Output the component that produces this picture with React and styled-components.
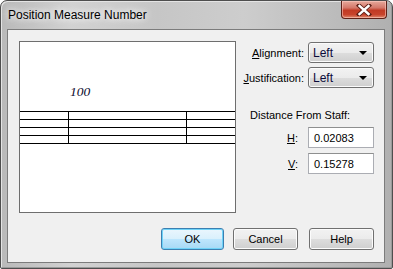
import React from "react";
import styled, { createGlobalStyle } from "styled-components";

const GlobalStyle = createGlobalStyle`
  html, body {
    margin: 0;
    padding: 0;
    background: #ffffff;
  }
  body {
    font-family: "Liberation Sans", Arial, sans-serif;
  }
`;

const Window = styled.div`
  box-sizing: border-box;
  width: 393px;
  height: 269px;
  border: 1px solid #4e4e4e;
  border-radius: 7px 7px 2px 2px;
  background: linear-gradient(
    to right,
    #b9b9b9 0%,
    #d2d2d2 18%,
    #c6c6c6 40%,
    #cdcdcd 62%,
    #bcbcbc 85%,
    #b0b0b0 100%
  );
  box-shadow: inset 1px 1px 0 #e4e4e4, inset -1px -1px 0 #9a9a9a;
  display: flex;
  flex-direction: column;
`;

const TitleBar = styled.div`
  height: 28px;
  display: flex;
  align-items: flex-start;
  justify-content: space-between;
`;

const Title = styled.span`
  margin: 7px 0 0 7px;
  font-family: "Liberation Sans", Arial, sans-serif;
  font-size: 12px;
  color: #000000;
  text-shadow: 0 0 6px #ffffff, 0 0 10px #f4f4f4;
`;

const CloseButton = styled.div`
  width: 46px;
  height: 18px;
  margin-right: 5px;
  box-sizing: border-box;
  border: 1px solid #5e2118;
  border-top: none;
  border-radius: 0 0 4px 4px;
  background: linear-gradient(
    to bottom,
    #e7a99b 0%,
    #d4786a 40%,
    #c13a24 55%,
    #c8442c 80%,
    #de8a6f 100%
  );
  box-shadow: inset 0 0 0 1px rgba(255, 210, 200, 0.55);
  display: flex;
  align-items: center;
  justify-content: center;
`;

const Client = styled.div`
  box-sizing: border-box;
  margin: 0 7px 5px 6px;
  flex: 1;
  border: 1px solid #7c7c7c;
  background: #f0f0f0;
  padding: 11px 10px 12px 11px;
  display: flex;
  flex-direction: column;
`;

const TopRow = styled.div`
  display: flex;
  gap: 7px;
`;

const Preview = styled.div`
  box-sizing: border-box;
  width: 217px;
  height: 172px;
  border: 1px solid #6e6e6e;
  background: #ffffff;
`;

const Options = styled.div`
  display: grid;
  grid-template-columns: 61px 66px;
  column-gap: 4px;
  row-gap: 4px;
  align-content: start;
  padding-top: 1px;
`;

const Label = styled.label`
  font-size: 11px;
  color: #000000;
  text-align: right;
  align-self: center;
  white-space: nowrap;
  padding-right: ${(p) => p.$pad || 0}px;

  u {
    text-decoration: underline;
  }
`;

const Select = styled.div`
  box-sizing: border-box;
  height: 21px;
  border: 1px solid #707070;
  border-radius: 3px;
  background: linear-gradient(
    to bottom,
    #f2f2f2 0%,
    #ebebeb 50%,
    #dddddd 51%,
    #cfcfcf 100%
  );
  box-shadow: inset 0 0 0 1px #fbfbfb;
  display: flex;
  align-items: center;
  justify-content: space-between;
  padding: 0 6px 0 4px;
  font-size: 12px;
  color: #0a0a3a;
`;

const Arrow = styled.span`
  width: 0;
  height: 0;
  border-left: 4px solid transparent;
  border-right: 4px solid transparent;
  border-top: 4px solid #000000;
`;

const Section = styled.div`
  grid-column: 1 / span 2;
  font-size: 11px;
  color: #000000;
  padding: 17px 0 2px 7px;
`;

const Field = styled.div`
  box-sizing: border-box;
  height: 21px;
  border: 1px solid #abadb3;
  border-top-color: #8e8f8f;
  background: #ffffff;
  display: flex;
  align-items: center;
  padding-left: 5px;
  font-size: 11px;
  color: #000000;
  margin-bottom: ${(p) => p.$gap || 0}px;
`;

const ButtonRow = styled.div`
  margin-top: 15px;
  display: flex;
  justify-content: flex-end;
`;

const Button = styled.button`
  box-sizing: border-box;
  width: ${(p) => p.$w || 65}px;
  height: 22px;
  margin-left: ${(p) => p.$ml || 0}px;
  border: 1px solid ${(p) => (p.$default ? "#3c7fb1" : "#707070")};
  border-radius: 3px;
  background: ${(p) =>
    p.$default
      ? "linear-gradient(to bottom, #eaf6fd 0%, #d9f0fc 50%, #bee6fd 51%, #a7d9f5 100%)"
      : "linear-gradient(to bottom, #f2f2f2 0%, #ebebeb 50%, #dddddd 51%, #cfcfcf 100%)"};
  box-shadow: inset 0 0 0 1px ${(p) => (p.$default ? "#6fd3f8" : "#fcfcfc")};
  font-family: "Liberation Sans", Arial, sans-serif;
  font-size: 11px;
  color: #000000;
  padding: 0;
`;

const CloseGlyph = () => (
  <svg width="16" height="12" viewBox="0 0 16 12">
    <path
      d="M3 1.5 L13 10.5 M13 1.5 L3 10.5"
      stroke="#5b1d14"
      strokeWidth="4.2"
      strokeLinecap="square"
    />
    <path
      d="M3.5 2 L12.5 10 M12.5 2 L3.5 10"
      stroke="#ffffff"
      strokeWidth="2.4"
      strokeLinecap="square"
    />
  </svg>
);

const staffLines = [69, 77, 85, 93, 101];

const StaffPreview = () => (
  <svg width="215" height="170" viewBox="0 0 215 170">
    {staffLines.map((y) => (
      <line key={y} x1="0" y1={y + 0.5} x2="215" y2={y + 0.5} stroke="#000" />
    ))}
    <line x1="48.5" y1="69" x2="48.5" y2="102" stroke="#000" />
    <line x1="166.5" y1="69" x2="166.5" y2="102" stroke="#000" />
    <text
      x="50"
      y="54"
      fontFamily="'Liberation Serif', 'Times New Roman', serif"
      fontStyle="italic"
      fontSize="13.5"
      fill="#0b0b2e"
    >
      100
    </text>
  </svg>
);

const App = () => (
  <>
    <GlobalStyle />
    <Window>
      <TitleBar>
        <Title>Position Measure Number</Title>
        <CloseButton>
          <CloseGlyph />
        </CloseButton>
      </TitleBar>
      <Client>
        <TopRow>
          <Preview>
            <StaffPreview />
          </Preview>
          <Options>
            <Label>
              <u>A</u>lignment:
            </Label>
            <Select>
              Left
              <Arrow />
            </Select>
            <Label>
              <u>J</u>ustification:
            </Label>
            <Select>
              Left
              <Arrow />
            </Select>
            <Section>Distance From Staff:</Section>
            <Label $pad={6}>
              <u>H</u>:
            </Label>
            <Field $gap={1}>0.02083</Field>
            <Label $pad={6}>
              <u>V</u>:
            </Label>
            <Field>0.15278</Field>
          </Options>
        </TopRow>
        <ButtonRow>
          <Button $default $w={63}>
            OK
          </Button>
          <Button $w={65} $ml={9}>
            Cancel
          </Button>
          <Button $w={65} $ml={11}>
            Help
          </Button>
        </ButtonRow>
      </Client>
    </Window>
  </>
);

export default App;
